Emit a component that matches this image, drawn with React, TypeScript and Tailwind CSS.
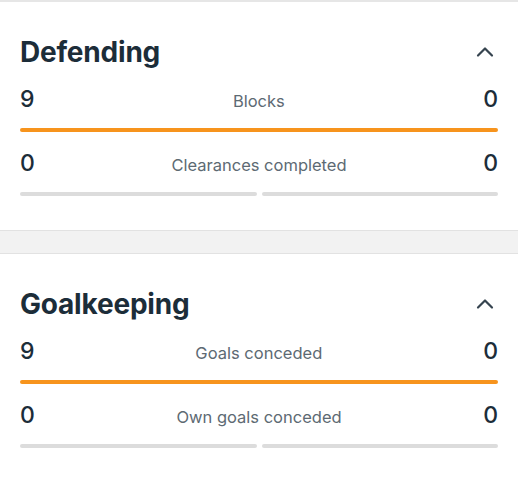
import React from 'react'

type Stat = { label: string; home: number; away: number }

const sections: { title: string; stats: Stat[] }[] = [
  {
    title: 'Defending',
    stats: [
      { label: 'Blocks', home: 9, away: 0 },
      { label: 'Clearances completed', home: 0, away: 0 },
    ],
  },
  {
    title: 'Goalkeeping',
    stats: [
      { label: 'Goals conceded', home: 9, away: 0 },
      { label: 'Own goals conceded', home: 0, away: 0 },
    ],
  },
]

function ChevronUp() {
  return (
    <svg viewBox="0 0 24 24" className="w-6 h-6 mr-[1px]" fill="none" stroke="#36444f" strokeWidth="2.2" strokeLinecap="round" strokeLinejoin="round">
      <path d="M5 15.5l7-7 7 7" />
    </svg>
  )
}

function StatRow({ stat }: { stat: Stat }) {
  const total = stat.home + stat.away
  const homePct = total ? (stat.home / total) * 100 : 0
  const awayPct = total ? (stat.away / total) * 100 : 0

  return (
    <div>
      <div className="flex items-baseline justify-between">
        <span className="text-[23px] leading-[28px] font-medium text-[#1c2d39]">{stat.home}</span>
        <span className="text-[16.5px] leading-[28px] text-[#5d6a73]">{stat.label}</span>
        <span className="text-[23px] leading-[28px] font-medium text-[#1c2d39]">{stat.away}</span>
      </div>
      {total > 0 ? (
        <div className="mt-[13px] flex h-1 gap-[5px]">
          {homePct > 0 && <div className="h-1 rounded-full bg-[#f7941d]" style={{ width: `${homePct}%` }} />}
          {awayPct > 0 && <div className="h-1 rounded-full bg-[#f7941d]" style={{ width: `${awayPct}%` }} />}
        </div>
      ) : (
        <div className="mt-[13px] flex h-1 gap-[5px]">
          <div className="h-1 flex-1 rounded-full bg-[#dcdcdc]" />
          <div className="h-1 flex-1 rounded-full bg-[#dcdcdc]" />
        </div>
      )}
    </div>
  )
}

export default function App() {
  return (
    <div className="w-[518px] h-[480px] bg-white overflow-hidden" style={{ fontFamily: 'Inter, "Noto Sans", sans-serif' }}>
      <div className="h-[2px] bg-[#e6e6e6]" />
      {sections.map((section, i) => (
        <div key={section.title}>
          {i > 0 && <div className="h-6 border-y border-[#e2e2e2] bg-[#f2f2f2]" />}
          <div className="px-5 pt-[33px] pb-[34px]">
            <div className="flex items-center justify-between">
              <h2 className="text-[28px] leading-[34px] font-bold text-[#1c2d39] tracking-[-0.2px]">{section.title}</h2>
              <ChevronUp />
            </div>
            <div className="mt-4">
              <StatRow stat={section.stats[0]} />
            </div>
            <div className="mt-[17px]">
              <StatRow stat={section.stats[1]} />
            </div>
          </div>
        </div>
      ))}
    </div>
  )
}
